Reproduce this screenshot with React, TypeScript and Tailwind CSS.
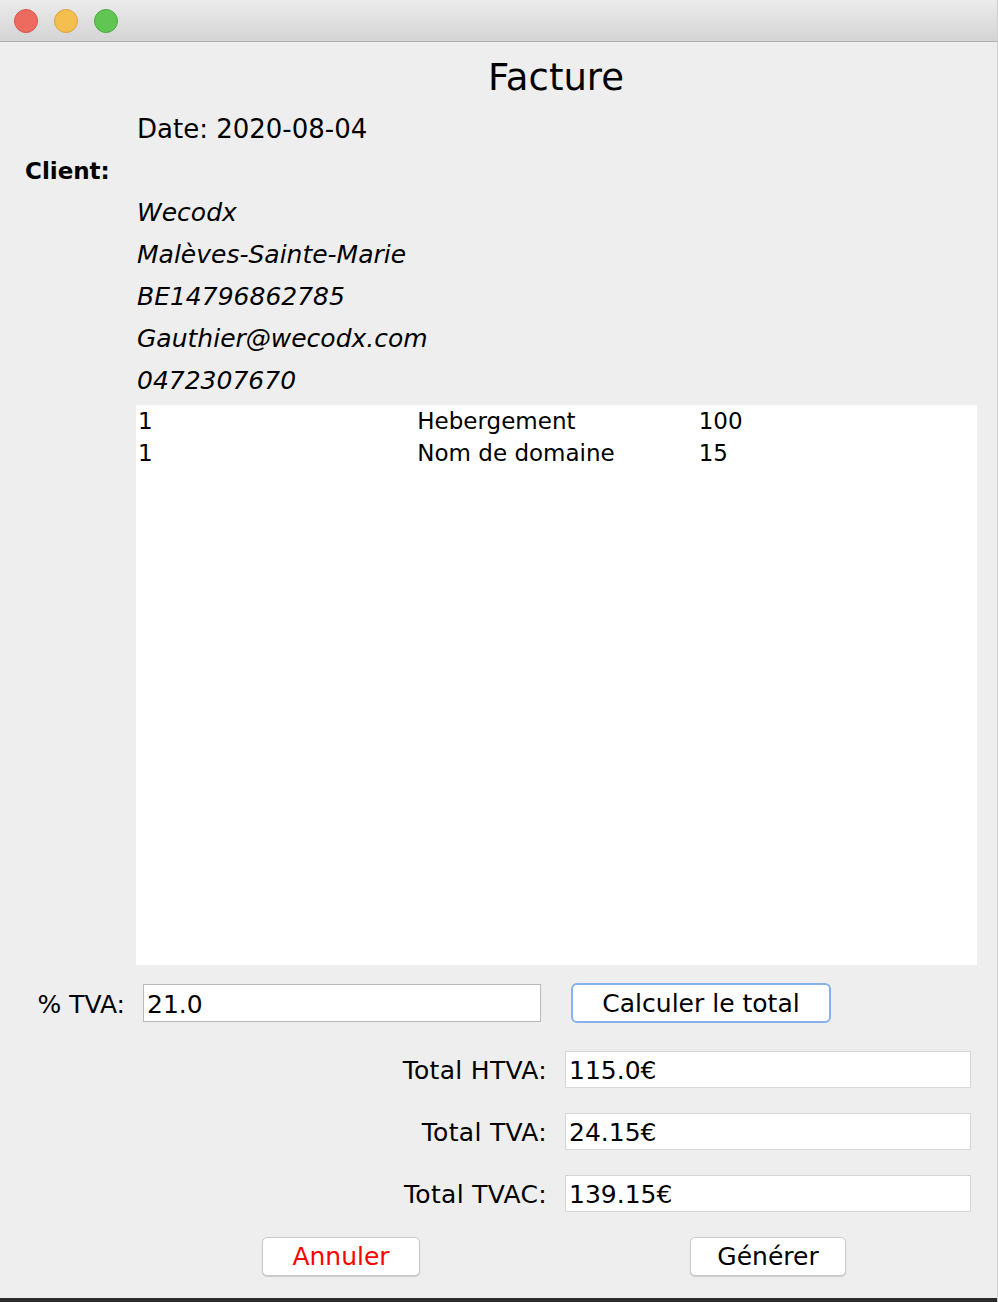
const font = { fontFamily: '"DejaVu Sans", Verdana, sans-serif' };

const clientLines = [
  "Wecodx",
  "Malèves-Sainte-Marie",
  "BE14796862785",
  "Gauthier@wecodx.com",
  "0472307670",
];

const items = [
  { qty: "1", label: "Hebergement", price: "100" },
  { qty: "1", label: "Nom de domaine", price: "15" },
];

const totals = [
  { label: "Total HTVA:", value: "115.0€" },
  { label: "Total TVA:", value: "24.15€" },
  { label: "Total TVAC:", value: "139.15€" },
];

const TitleBar = () => (
  <div className="h-[42px] shrink-0 flex items-center gap-[16px] pl-[14px] bg-gradient-to-b from-[#ebebeb] to-[#d4d4d4] border-b border-[#adadad]">
    <span className="w-[24px] h-[24px] rounded-full bg-[#ed6a5e] border border-[#d6554a]" />
    <span className="w-[24px] h-[24px] rounded-full bg-[#f5bf4f] border border-[#d9a23d]" />
    <span className="w-[24px] h-[24px] rounded-full bg-[#61c554] border border-[#4ea83f]" />
  </div>
);

export default function App() {
  return (
    <div className="w-[998px] h-[1302px] bg-[#eeeeee] flex flex-col overflow-hidden text-black border-r border-[#cfcfcf]" style={font}>
      <TitleBar />

      <div className="flex flex-col">
        <h1 className="mt-[15px] pl-[136px] pr-[21px] h-[42px] leading-[42px] text-[37px] text-center">Facture</h1>

        <div className="mt-[9px] pl-[137px] h-[42px] leading-[42px] text-[26px]">Date: 2020-08-04</div>
        <div className="pl-[25px] h-[42px] leading-[42px] text-[23px] font-bold">Client:</div>
        {clientLines.map((line) => (
          <div key={line} className="pl-[137px] h-[42px] leading-[42px] text-[25px] italic">
            {line}
          </div>
        ))}

        <div className="mt-[3px] ml-[136px] w-[841px] h-[560px] bg-white">
          {items.map((it, i) => (
            <div key={i} className="grid grid-cols-3 h-[32px] leading-[33px] text-[23px]">
              <span className="pl-[2px]">{it.qty}</span>
              <span className="pl-[1px]">{it.label}</span>
              <span className="pl-[2px]">{it.price}</span>
            </div>
          ))}
        </div>

        <div className="mt-[18px] h-[40px] flex items-center">
          <span className="w-[125px] pt-[3px] text-right text-[25px]">% TVA:</span>
          <div className="ml-[18px] w-[398px] h-[38px] bg-white border border-[#b9b9b9] pl-[3px] pt-[3px] flex items-center text-[25px]">21.0</div>
          <button className="ml-[30px] w-[260px] h-[40px] bg-white border-2 border-[#86b1ec] rounded-[6px] text-[25px] leading-none">
            Calculer le total
          </button>
        </div>

        <div className="mt-[28px] flex flex-col gap-[25px]">
          {totals.map((t) => (
            <div key={t.label} className="h-[37px] flex items-center">
              <span className="w-[547px] pt-[3px] text-right text-[25px] tracking-[0.3px]">{t.label}</span>
              <div className="ml-[18px] w-[406px] h-[37px] bg-white border border-[#d6d6d6] pl-[3px] pt-[3px] flex items-center text-[25px]">
                {t.value}
              </div>
            </div>
          ))}
        </div>

        <div className="mt-[25px] flex items-center">
          <button className="ml-[262px] w-[158px] h-[39px] bg-white border border-[#c8c8c8] rounded-[5px] shadow-[0_1px_1px_rgba(0,0,0,0.15)] text-[25px] leading-none text-[#ff0000]">
            Annuler
          </button>
          <button className="ml-[270px] w-[156px] h-[39px] bg-white border border-[#c8c8c8] rounded-[5px] shadow-[0_1px_1px_rgba(0,0,0,0.15)] text-[25px] leading-none">
            Générer
          </button>
        </div>
      </div>

      <div className="mt-auto h-[4px] bg-[#2b2b2b]" />
    </div>
  );
}
